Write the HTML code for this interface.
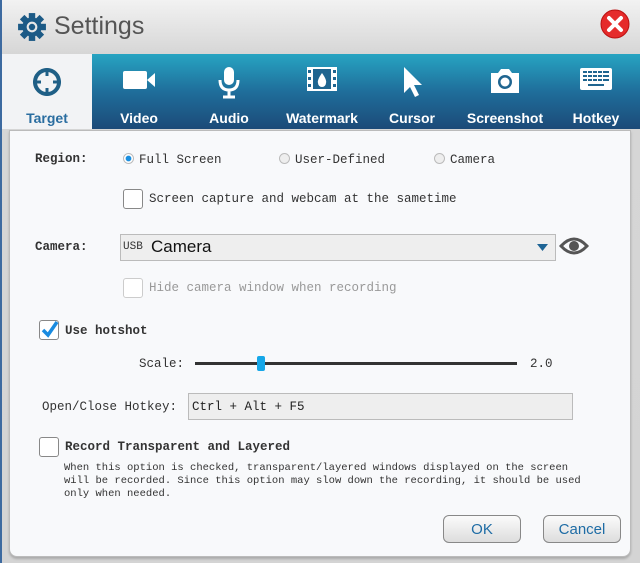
<!DOCTYPE html>
<html><head><meta charset="utf-8"><style>
*{margin:0;padding:0;box-sizing:border-box}
body{width:640px;height:563px;overflow:hidden;background:#dcdcdc;font-family:"Liberation Mono",monospace;position:relative}
.frame{position:absolute;left:0;top:0;width:640px;height:563px;background:linear-gradient(#f2f2f2,#d6d6d6 54px,#d4d4d4);border-left:2px solid #3d6aa0}
.title{position:absolute;left:54px;top:12px;font:25px "Liberation Sans",sans-serif;color:#555}
.tabs{position:absolute;left:2px;top:54px;width:638px;height:75px;background:linear-gradient(#27a4c2,#1f6e9b 50%,#1c4a78)}
.tab{position:absolute;top:0;height:75px;text-align:center;color:#fff;font:bold 14px "Liberation Sans",sans-serif}
.tab span{position:absolute;left:0;right:0;top:56px}
.tab svg{position:absolute;left:50%;top:12px;transform:translateX(-50%)}
.t0{left:0;width:90px;background:#f2f3f5;color:#2a6da0}
.panel{position:absolute;left:9px;top:130px;width:622px;height:427px;background:#f8f9fb;border:1px solid #bbb;border-radius:0 0 8px 8px;box-shadow:0 2px 2px #aaa}
.a{position:absolute;font-size:12.5px;color:#333;white-space:nowrap}
.b{font-weight:bold}
.rad{position:absolute;width:11px;height:11px;border-radius:50%;border:1px solid #bbb;background:#eee}
.chk{position:absolute;width:20px;height:20px;border:1px solid #888;border-radius:3px;background:#fff}
.btn{position:absolute;width:78px;height:28px;border:1px solid #888;border-radius:6px;background:linear-gradient(#fbfbfb,#ddd);color:#1e6ca5;font:15px "Liberation Sans",sans-serif;text-align:center;line-height:28px}
</style></head><body>
<div class="frame"></div>
<svg style="position:absolute;left:17px;top:12px" width="30" height="30" viewBox="0 0 28 28"><g fill="#1c5a86"><circle cx="14" cy="14" r="9"/><g transform="translate(14 14)"><rect x="-3" y="-13" width="6" height="26"/><rect x="-3" y="-13" width="6" height="26" transform="rotate(45)"/><rect x="-3" y="-13" width="6" height="26" transform="rotate(90)"/><rect x="-3" y="-13" width="6" height="26" transform="rotate(135)"/></g></g><circle cx="14" cy="14" r="5" fill="#e8e8e8"/><circle cx="14" cy="14" r="3" fill="#1c5a86"/></svg>
<div class="title">Settings</div>
<svg style="position:absolute;left:600px;top:9px" width="30" height="30" viewBox="0 0 30 30"><circle cx="15" cy="15" r="14" fill="#e52b2b" stroke="#b11" /><path d="M9 9L21 21M21 9L9 21" stroke="#fff" stroke-width="4" stroke-linecap="round"/></svg>
<div class="tabs">
<div class="tab t0"><svg width="32" height="32" viewBox="0 0 32 32"><circle cx="16" cy="16" r="12" fill="none" stroke="#1f5f86" stroke-width="4"/><path d="M16 2v8M16 22v8M2 16h8M22 16h8" stroke="#1f5f86" stroke-width="3"/></svg><span>Target</span></div>
<div class="tab" style="left:92px;width:90px"><svg width="36" height="26" viewBox="0 0 36 26"><rect x="2" y="5" width="24" height="18" rx="2" fill="#fff"/><path d="M26 14l8-7v14z" fill="#fff"/></svg><span>Video</span></div>
<div class="tab" style="left:182px;width:90px"><svg width="24" height="34" viewBox="0 0 24 34"><rect x="7" y="1" width="10" height="18" rx="5" fill="#fff"/><path d="M3 14q0 10 9 10q9 0 9-10M12 24v6M6 31h12" fill="none" stroke="#fff" stroke-width="3"/></svg><span>Audio</span></div>
<div class="tab" style="left:272px;width:96px"><svg width="32" height="26" viewBox="0 0 32 26"><rect x="1" y="1" width="30" height="24" fill="#fff"/><rect x="7" y="3" width="18" height="20" fill="#1f6590"/><path d="M16 7q-5 7-4 10a4 4 0 0 0 8 0q1-3-4-10z" fill="#fff"/><g fill="#1f6590"><rect x="2" y="4" width="3" height="3"/><rect x="2" y="11" width="3" height="3"/><rect x="2" y="18" width="3" height="3"/><rect x="27" y="4" width="3" height="3"/><rect x="27" y="11" width="3" height="3"/><rect x="27" y="18" width="3" height="3"/></g></svg><span>Watermark</span></div>
<div class="tab" style="left:368px;width:84px"><svg width="22" height="34" viewBox="0 0 22 34"><path d="M3 1v26l6-6 5 10 4-2-5-10h8z" fill="#fff"/></svg><span>Cursor</span></div>
<div class="tab" style="left:458px;width:90px"><svg width="32" height="28" viewBox="0 0 32 28"><path d="M2 7h7l3-4h8l3 4h7v20H2z" fill="#fff"/><circle cx="16" cy="16" r="7" fill="#1f6590"/><circle cx="16" cy="16" r="4.5" fill="#fff"/></svg><span>Screenshot</span></div>
<div class="tab" style="left:550px;width:88px"><svg width="34" height="26" viewBox="0 0 34 26"><rect x="1" y="2" width="32" height="22" rx="2" fill="#fff"/><g fill="#1f6590"><rect x="4" y="5" width="26" height="2"/><rect x="4" y="9" width="26" height="2"/><rect x="4" y="13" width="26" height="2"/><rect x="9" y="18" width="16" height="2"/></g><g fill="#fff"><rect x="8" y="5" width="1" height="10"/><rect x="13" y="5" width="1" height="10"/><rect x="18" y="5" width="1" height="10"/><rect x="23" y="5" width="1" height="10"/></g></svg><span>Hotkey</span></div>
</div>
<div class="panel"></div>
<div class="a b" style="left:35px;top:152px">Region:</div>
<div class="rad" style="left:123px;top:153px;background:radial-gradient(#1a8fe0 40%,#fff 50%)"></div><div class="a" style="left:139px;top:153px">Full Screen</div>
<div class="rad" style="left:279px;top:153px"></div><div class="a" style="left:295px;top:153px">User-Defined</div>
<div class="rad" style="left:434px;top:153px"></div><div class="a" style="left:450px;top:153px">Camera</div>
<div class="chk" style="left:123px;top:189px"></div><div class="a" style="left:149px;top:192px">Screen capture and webcam at the sametime</div>
<div class="a b" style="left:35px;top:240px">Camera:</div>
<div style="position:absolute;left:120px;top:234px;width:436px;height:27px;border:1px solid #bbb;background:#eee"></div>
<div class="a" style="left:123px;top:241px;font-size:11px">USB</div><div class="a" style="left:151px;top:237px;font:17px 'Liberation Sans',sans-serif;color:#111">Camera</div>
<svg style="position:absolute;left:537px;top:243px" width="12" height="9"><path d="M0 1h11L5.5 8z" fill="#1e6495"/></svg>
<svg style="position:absolute;left:559px;top:236px" width="30" height="20" viewBox="0 0 30 20"><path d="M2 10q13-14 26 0q-13 14-26 0z" fill="none" stroke="#555" stroke-width="3"/><circle cx="15" cy="10" r="5" fill="#555"/></svg>
<div class="chk" style="left:123px;top:278px;border-color:#ccc"></div><div class="a" style="left:149px;top:281px;color:#999">Hide camera window when recording</div>
<div class="chk" style="left:39px;top:320px"></div>
<svg style="position:absolute;left:41px;top:320px" width="18" height="18"><path d="M2 10l5 5 9-13" fill="none" stroke="#1a8be0" stroke-width="3.5"/></svg>
<div class="a b" style="left:65px;top:324px">Use hotshot</div>
<div class="a" style="left:139px;top:357px">Scale:</div>
<div style="position:absolute;left:195px;top:362px;width:322px;height:3px;background:#333"></div>
<div style="position:absolute;left:257px;top:356px;width:8px;height:15px;background:#16a7e8;border-radius:2px"></div>
<div class="a" style="left:530px;top:357px">2.0</div>
<div class="a" style="left:42px;top:400px">Open/Close Hotkey:</div>
<div style="position:absolute;left:188px;top:393px;width:385px;height:27px;border:1px solid #bbb;background:#eee"></div>
<div class="a" style="left:192px;top:400px;color:#222">Ctrl + Alt + F5</div>
<div class="chk" style="left:39px;top:437px"></div>
<div class="a b" style="left:65px;top:440px">Record Transparent and Layered</div>
<div class="a" style="left:64px;top:462px;font-size:10.5px;line-height:13px">When this option is checked, transparent/layered windows displayed on the screen<br>will be recorded. Since this option may slow down the recording, it should be used<br>only when needed.</div>
<div class="btn" style="left:443px;top:515px">OK</div>
<div class="btn" style="left:543px;top:515px">Cancel</div>
</body></html>
